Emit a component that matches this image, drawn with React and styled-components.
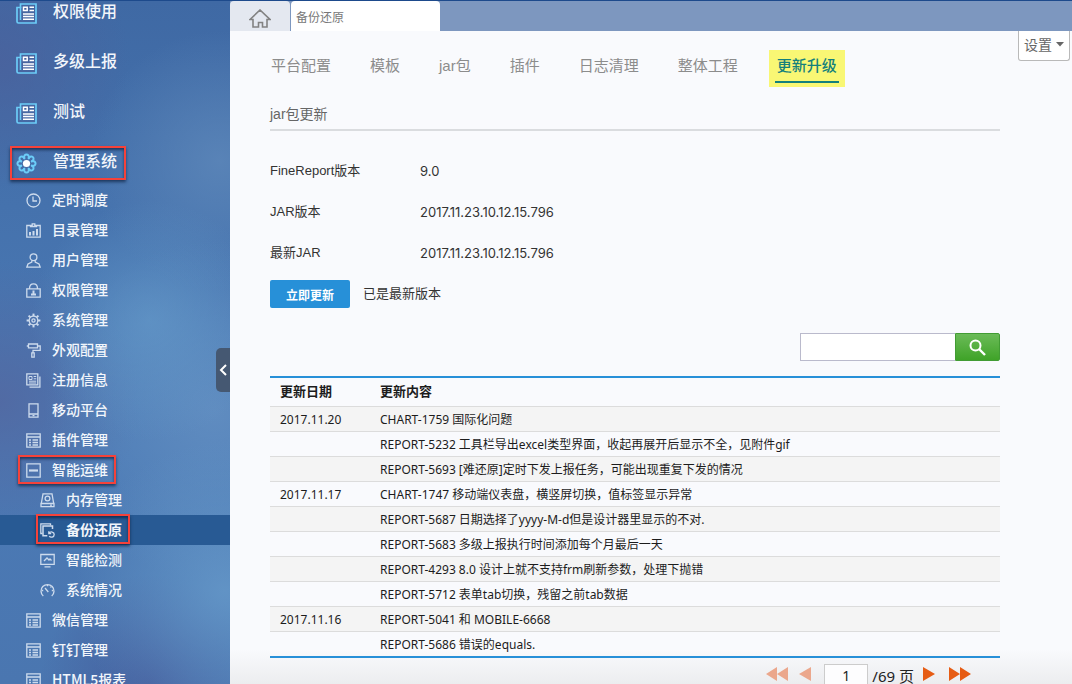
// src/App.jsx
import React, { useState } from 'react';
import styled, { createGlobalStyle, css } from 'styled-components';

const mainMenu = [
  { name: '权限使用', icon: 'news' },
  { name: '多级上报', icon: 'news' },
  { name: '测试', icon: 'news' },
  { name: '管理系统', icon: 'flower', mark: { left: 10, width: 116, top: 11, height: 34 } },
];

const subMenu = [
  { name: '定时调度', icon: 'clock' },
  { name: '目录管理', icon: 'report' },
  { name: '用户管理', icon: 'user' },
  { name: '权限管理', icon: 'lock' },
  { name: '系统管理', icon: 'gear' },
  { name: '外观配置', icon: 'roller' },
  { name: '注册信息', icon: 'card' },
  { name: '移动平台', icon: 'phone' },
  { name: '插件管理', icon: 'list' },
  { name: '智能运维', icon: 'minus', mark: { left: 18, width: 98, top: 0, height: 29 } },
  { name: '内存管理', icon: 'disk', deep: true },
  { name: '备份还原', icon: 'backup', deep: true, mark: { left: 36, width: 94, top: -1, height: 30 } },
  { name: '智能检测', icon: 'monitor', deep: true },
  { name: '系统情况', icon: 'gauge', deep: true },
  { name: '微信管理', icon: 'list' },
  { name: '钉钉管理', icon: 'list' },
  { name: 'HTML5报表', icon: 'list' },
];

const tabs = ['平台配置', '模板', 'jar包', '插件', '日志清理', '整体工程', '更新升级'];

const versions = [
  { label: 'FineReport版本', value: '9.0' },
  { label: 'JAR版本', value: '2017.11.23.10.12.15.796' },
  { label: '最新JAR', value: '2017.11.23.10.12.15.796' },
];

const updates = [
  ['2017.11.20', 'CHART-1759 国际化问题'],
  ['', 'REPORT-5232 工具栏导出excel类型界面，收起再展开后显示不全，见附件gif'],
  ['', 'REPORT-5693 [难还原]定时下发上报任务，可能出现重复下发的情况'],
  ['2017.11.17', 'CHART-1747 移动端仪表盘，横竖屏切换，值标签显示异常'],
  ['', 'REPORT-5687 日期选择了yyyy-M-d但是设计器里显示的不对.'],
  ['', 'REPORT-5683 多级上报执行时间添加每个月最后一天'],
  ['', 'REPORT-4293 8.0 设计上就不支持frm刷新参数，处理下抛错'],
  ['', 'REPORT-5712 表单tab切换，残留之前tab数据'],
  ['2017.11.16', 'REPORT-5041 和 MOBILE-6668'],
  ['', 'REPORT-5686 错误的equals.'],
];

const teeth = [0, 45, 90, 135, 180, 225, 270, 315];

// small icons are drawn on a 15 x 15 grid
const icons = {
  clock: (
    <>
      <circle cx="7.5" cy="7.5" r="6.5" />
      <path d="M7 3.5V8h4" />
    </>
  ),
  report: (
    <>
      <path d="M4 2.5H.8v11.7h13.4V2.5H11M4.5 3.5v-1h1.7V.8h2.6v1.7h1.7v1z" />
      <path d="M4 12.500V9M7.500 12.500V8M11 12.500V6" strokeWidth="2" />
    </>
  ),
  user: (
    <>
      <circle cx="7.500" cy="4.200" r="3.400" />
      <path d="M5.800 7.500v1.700L2 11 .8 14.200h13.400L13 11 9.200 9.200V7.500" />
    </>
  ),
  lock: (
    <>
      <path d="M.8 5.800h13.400v8.400H.8zM3.500 5.500C3.500 2.500 5 .8 7.500.8s4 1.700 4 4.700" />
      <path d="M7.500 7.500v3M5 11.500h5" strokeWidth="2" />
    </>
  ),
  gear: (
    <>
      <circle cx="7.500" cy="7.500" r="4.300" />
      <circle cx="7.500" cy="7.500" r="1.600" />
      {teeth.map((angle) => (
        <path key={angle} d="M7.500 3V.6" strokeWidth="2" transform={`rotate(${angle} 7.500 7.500)`} />
      ))}
    </>
  ),
  roller: <path d="M2.500 1h9v3.800h-9zM2.500 3H.8M11.500 3h2.700v4.300H7v2.500M5.800 9.800h2.400v4.400H5.800z" />,
  card: (
    <>
      <path d="M.8.8h11v11h-11zM13.900 3.500v10.600H3.500" />
      <path d="M3 3.500h3v3H3zM7.700 3.500h2.500M7.700 5.800h2.500M3 8.200h7.200M3 10h7.200" strokeWidth="1" />
    </>
  ),
  phone: (
    <>
      <path d="M3 .8h9v13.400H3zM3 11h9" />
      <path d="M6.500 12.600h2" />
    </>
  ),
  list: (
    <>
      <path d="M.8.8h13.400v13.400H.8zM.8 4h13.400" />
      <path d="M3 7h2M6.500 7H12M3 9.500h2M6.500 9.500H12M3 12h2M6.500 12H12" strokeWidth="1.500" />
    </>
  ),
  minus: (
    <>
      <path d="M.8.8h13.400v13.400H.8z" />
      <path d="M3 7.500h9" strokeWidth="2.200" />
    </>
  ),
  disk: (
    <>
      <path d="M3 .8h9l1.700 9.700H1.300zM1 10.500h13v3.200H1z" />
      <circle cx="7.500" cy="5.500" r="2.400" />
      <path d="M10 12.200h2" />
    </>
  ),
  backup: (
    <>
      <path d="M2.500 10.500H.8V.8h9.700v1.500" />
      <path d="M12.500 6V3H3v9.700h4.300" strokeWidth="1.500" />
      <path d="M8.800 8.300v2.300h2.400M9 10.300c1.500-2.300 5.200-1.500 5.200 1.200s-3.500 3.500-5 1.700" />
    </>
  ),
  monitor: <path d="M.8 1.500h13.400v9.800H.8zM4 8l3-3 2 2 1-1 1.500 1.500M4.500 13.800h6" />,
  gauge: (
    <>
      <path d="M3.300 13A6.500 6.500 0 1 1 11.700 13" />
      <path d="M5 5l3.300 4M7.500 2v1.200M2 7.500h1.200M11.800 7.500H13M10.500 4.500l.7-.7" />
    </>
  ),
};

const SmallIcon = ({ name }) => (
  <SmallSvg viewBox="0 0 15 15" aria-hidden="true">
    {icons[name]}
  </SmallSvg>
);

const NewsIcon = () => (
  <BigSvg viewBox="0 0 21 21" aria-hidden="true">
    <path d="M4.500 1h15.500v19H2.500Q1 20 1 18.500V4.500h3.500z" stroke="#6ccdf8" strokeWidth="1.700" />
    <path d="M4.500 4v13" stroke="#6ccdf8" strokeWidth="1.500" />
    <path d="M7.500 4.300h3.700v3.200H7.500z" stroke="#fff" strokeWidth="1.500" />
    <path d="M13.500 4.200H18M13.500 7.500H18M7 11h11M7 13.500h11M7 16.200h11" stroke="#fff" strokeWidth="1.500" />
  </BigSvg>
);

const FlowerIcon = () => (
  <BigSvg viewBox="0 0 21 21" aria-hidden="true">
    {teeth.map((angle) => (
      <path
        key={angle}
        d="M8.200 5.200C7.300 .2 13.700 .2 12.800 5.200"
        stroke="#6ccdf8"
        strokeWidth="2"
        strokeLinecap="round"
        transform={`rotate(${angle} 10.500 10.500)`}
      />
    ))}
    <circle cx="10.500" cy="10.500" r="3.600" fill="#fff" />
  </BigSvg>
);

const App = () => {
  const [current, setCurrent] = useState('备份还原');
  const [activeTab, setActiveTab] = useState('更新升级');
  const [keyword, setKeyword] = useState('');
  const [page, setPage] = useState('1');

  return (
    <>
      <GlobalStyle />
      <Shell>
        <Sidebar>
          <MenuList>
            {mainMenu.map((item) => (
              <MenuItem key={item.name}>
                <MainLink href="#">
                  {item.icon === 'news' ? <NewsIcon /> : <FlowerIcon />}
                  <MainLabel>{item.name}</MainLabel>
                </MainLink>
                {item.mark && <Mark $box={item.mark} />}
              </MenuItem>
            ))}
            {subMenu.map((item) => (
              <MenuItem key={item.name}>
                <SubLink
                  href="#"
                  $deep={item.deep}
                  $active={item.name === current}
                  onClick={() => setCurrent(item.name)}
                >
                  <SmallIcon name={item.icon} />
                  <SubLabel>{item.name}</SubLabel>
                </SubLink>
                {item.mark && <Mark $box={item.mark} />}
              </MenuItem>
            ))}
          </MenuList>
          <Collapse aria-label="收起">
            <svg width="8" height="12" viewBox="0 0 8 12" fill="none" stroke="#fff" strokeWidth="2">
              <path d="M7 1 2 6l5 5" />
            </svg>
          </Collapse>
        </Sidebar>

        <Main>
          <WindowTabs>
            <HomeTab aria-label="首页">
              <svg width="22" height="19" viewBox="0 0 22 19" fill="none" stroke="#828282" strokeWidth="1.600">
                <path d="M1 10.500 11 1l10 9.500h-3V18h-4.500v-4.500h-4V18H4v-7.500z" />
              </svg>
            </HomeTab>
            <PageTab>备份还原</PageTab>
          </WindowTabs>

          <Content>
            <TopRow>
              <Tabs>
                {tabs.map((name) => (
                  <Tab key={name} href="#" $active={name === activeTab} onClick={() => setActiveTab(name)}>
                    <span>{name}</span>
                  </Tab>
                ))}
              </Tabs>
              <Settings>
                设置
                <svg width="8" height="5" viewBox="0 0 8 5" fill="#666">
                  <path d="M0 0h8L4 4.500z" />
                </svg>
              </Settings>
            </TopRow>

            <Body>
              <SectionTitle>jar包更新</SectionTitle>
              <Versions>
                {versions.map((row) => (
                  <VersionRow key={row.label}>
                    <dt>{row.label}</dt>
                    <dd>{row.value}</dd>
                  </VersionRow>
                ))}
              </Versions>
              <UpdateRow>
                <UpdateButton>立即更新</UpdateButton>
                <span>已是最新版本</span>
              </UpdateRow>

              <SearchForm onSubmit={(e) => e.preventDefault()}>
                <SearchInput
                  type="text"
                  aria-label="搜索"
                  value={keyword}
                  onChange={(e) => setKeyword(e.target.value)}
                />
                <SearchButton type="submit" aria-label="搜索">
                  <svg width="17" height="17" viewBox="0 0 17 17" fill="none" stroke="#fff" strokeWidth="2">
                    <circle cx="6.500" cy="6.500" r="5" />
                    <path d="M10 10l6 6" strokeWidth="2.400" />
                  </svg>
                </SearchButton>
              </SearchForm>

              <Table>
                <thead>
                  <tr>
                    <DateHead>更新日期</DateHead>
                    <Head>更新内容</Head>
                  </tr>
                </thead>
                <tbody>
                  {updates.map(([date, text]) => (
                    <Row key={text}>
                      <Cell>{date}</Cell>
                      <Cell>{text}</Cell>
                    </Row>
                  ))}
                </tbody>
              </Table>

              <Pager>
                <PagerGroup>
                  <PagerButton aria-label="首页" disabled>
                    <svg width="22" height="14" viewBox="0 0 22 14">
                      <path d="M11 0v14L0 7zM22 0v14L11 7z" />
                    </svg>
                  </PagerButton>
                  <PagerButton aria-label="上一页" disabled>
                    <svg width="12" height="14" viewBox="0 0 12 14">
                      <path d="M12 0v14L0 7z" />
                    </svg>
                  </PagerButton>
                </PagerGroup>
                <PageBox>
                  <PageInput
                    type="text"
                    aria-label="页码"
                    value={page}
                    onChange={(e) => setPage(e.target.value)}
                  />
                  /69 页
                </PageBox>
                <PagerGroup $wide>
                  <PagerButton aria-label="下一页">
                    <svg width="12" height="14" viewBox="0 0 12 14">
                      <path d="M0 0v14l12-7z" />
                    </svg>
                  </PagerButton>
                  <PagerButton aria-label="末页">
                    <svg width="22" height="14" viewBox="0 0 22 14">
                      <path d="M0 0v14l11-7zM11 0v14l11-7z" />
                    </svg>
                  </PagerButton>
                </PagerGroup>
              </Pager>
            </Body>
          </Content>
        </Main>
      </Shell>
    </>
  );
};

export default App;

const GlobalStyle = createGlobalStyle`
  * {
    box-sizing: border-box;
  }
  body {
    margin: 0;
    overflow: hidden;
    font-family: "Liberation Sans", "Noto Sans CJK SC", sans-serif;
    font-size: 13px;
    color: #333;
  }
  a {
    text-decoration: none;
  }
  button, input {
    font-family: inherit;
    margin: 0;
  }
  button {
    cursor: pointer;
  }
`;

const Shell = styled.div`
  display: flex;
  height: 100vh;
  border-top: 1px solid #1d4a8c;
  overflow: hidden;
`;

const Sidebar = styled.nav`
  position: relative;
  flex: none;
  width: 230px;
  overflow: hidden;
  background:
    radial-gradient(circle at 150px 320px, rgba(103, 157, 204, 0.6), transparent 120px),
    radial-gradient(circle at 225px 590px, rgba(103, 154, 202, 0.8), transparent 150px),
    radial-gradient(circle at 215px 410px, rgba(101, 145, 195, 0.8), transparent 170px),
    radial-gradient(circle at 220px 160px, rgba(94, 136, 186, 0.8), transparent 130px),
    radial-gradient(circle at 150px 683px, rgba(68, 90, 154, 0.8), transparent 110px),
    radial-gradient(circle at 0 400px, rgba(83, 103, 160, 0.8), transparent 140px),
    radial-gradient(circle at 0 60px, rgba(75, 97, 156, 0.8), transparent 130px),
    linear-gradient(#3f69a4, #4572ad 30%, #4b7ab5 65%, #4a76b0);
`;

// the menu is scrolled a little, so its first entry is cut by the top edge
const MenuList = styled.ul`
  list-style: none;
  margin: -16px 0 0;
  padding: 0;
`;

const MenuItem = styled.li`
  position: relative;
`;

const MainLink = styled.a`
  display: flex;
  align-items: center;
  gap: 16px;
  height: 50px;
  padding: 6px 0 0 16px;
  font-family: "Noto Sans CJK SC", sans-serif;
  font-size: 16px;
  line-height: 20px;
  font-weight: 500;
  color: #f2f6fb;
`;

const MainLabel = styled.span`
  padding-bottom: 6px;
`;

const SubLink = styled.a`
  display: flex;
  align-items: center;
  gap: 11px;
  height: 30px;
  padding-left: ${(props) => (props.$deep ? 40 : 26)}px;
  font-family: "Noto Sans CJK SC", sans-serif;
  font-size: 14px;
  line-height: 20px;
  font-weight: 500;
  color: #f2f6fb;
  ${(props) =>
    props.$active &&
    css`
      background-color: #285a94;
      font-weight: 700;
    `}
`;

const SubLabel = styled.span`
  padding-bottom: 3px;
`;

const Mark = styled.span`
  position: absolute;
  top: ${(props) => props.$box.top}px;
  left: ${(props) => props.$box.left}px;
  width: ${(props) => props.$box.width}px;
  height: ${(props) => props.$box.height}px;
  border: 2px solid #f5423a;
  box-shadow: 0 2px 3px rgba(10, 30, 60, 0.7), inset 0 2px 3px rgba(10, 30, 60, 0.7);
  pointer-events: none;
  z-index: 1;
`;

const SmallSvg = styled.svg`
  flex: none;
  width: 15px;
  height: 15px;
  margin-top: 1px;
  fill: none;
  stroke: #cddbed;
  stroke-width: 1.3;
`;

const BigSvg = styled.svg`
  flex: none;
  width: 21px;
  height: 21px;
  fill: none;
`;

const Collapse = styled.button`
  position: absolute;
  right: 0;
  top: 347px;
  display: flex;
  align-items: center;
  justify-content: center;
  width: 14px;
  height: 44px;
  padding: 0;
  border: 0;
  border-radius: 5px 0 0 5px;
  background-color: #455872;
`;

const Main = styled.main`
  flex: 1;
  min-width: 0;
  display: flex;
  flex-direction: column;
`;

const WindowTabs = styled.div`
  display: flex;
  gap: 1px;
  flex: none;
  height: 30px;
  background-color: #7d97bf;
`;

const HomeTab = styled.button`
  display: flex;
  align-items: center;
  justify-content: center;
  width: 60px;
  padding: 4px 0 0;
  border: 0;
  border-radius: 4px 4px 0 0;
  background-color: #e4e8f0;
`;

const PageTab = styled.button`
  width: 149px;
  padding: 0 5px;
  border: 0;
  border-radius: 4px 4px 0 0;
  background-color: #fff;
  font-size: 12px;
  text-align: left;
  color: #777;
`;

const Content = styled.div`
  flex: 1;
  min-height: 0;
  background: linear-gradient(#f9fafd calc(100% - 35px), #ecedef);
`;

const TopRow = styled.div`
  display: flex;
  align-items: flex-start;
  justify-content: space-between;
  padding: 0 2px 0 33px;
`;

const Tabs = styled.div`
  display: flex;
  gap: 23px;
  padding-top: 19px;
`;

const Tab = styled.a`
  height: 37px;
  padding: 4px 6px 0;
  font-size: 15px;
  line-height: 24px;
  color: #8c8c8c;

  & span {
    display: block;
    height: 29px;
    padding: 0 2px;
  }

  ${(props) =>
    props.$active &&
    css`
      background-color: #f9f774;
      font-weight: 500;
      color: #14807c;

      & span {
        border-bottom: 2px solid #14807c;
      }
    `}
`;

const Settings = styled.button`
  display: flex;
  align-items: center;
  gap: 4px;
  height: 30px;
  padding: 0 5px 3px;
  border: 1px solid #b9b9b9;
  border-top: 0;
  border-radius: 0 0 3px 3px;
  background-color: #fff;
  font-size: 14px;
  color: #666;
`;

const Body = styled.div`
  padding: 0 72px 0 40px;
`;

const SectionTitle = styled.h2`
  margin: 0;
  padding: 17px 0 5px;
  border-bottom: 2px solid #dadcdf;
  font-size: 14px;
  font-weight: 400;
  line-height: 20px;
  color: #666;
`;

const Versions = styled.dl`
  display: flex;
  flex-direction: column;
  gap: 21px;
  margin: 30px 0 17px;
`;

const VersionRow = styled.div`
  display: grid;
  grid-template-columns: 150px 1fr;
  line-height: 20px;

  & dd {
    margin: 0;
    font-family: Inter, "Noto Sans CJK SC", sans-serif;
  }
`;

const UpdateRow = styled.div`
  display: flex;
  align-items: center;
  gap: 13px;
  line-height: 20px;

  & span {
    padding-bottom: 1px;
  }
`;

const UpdateButton = styled.button`
  width: 80px;
  height: 28px;
  padding: 0;
  border: 0;
  border-radius: 2px;
  background-color: #2790d8;
  font-size: 12px;
  font-weight: 700;
  color: #fff;
`;

const SearchForm = styled.form`
  display: flex;
  justify-content: flex-end;
  margin: 25px 0 15px;
`;

const SearchInput = styled.input`
  width: 155px;
  height: 28px;
  padding: 0 6px;
  border: 1px solid #babacc;
  border-right: 0;
  background-color: #fff;
`;

const SearchButton = styled.button`
  display: flex;
  align-items: center;
  justify-content: center;
  width: 45px;
  height: 28px;
  padding: 0;
  border: 1px solid #429c34;
  border-radius: 0 2px 2px 0;
  background: linear-gradient(#6bbb58, #3fa328);
`;

const Table = styled.table`
  width: 100%;
  border-collapse: separate;
  border-spacing: 0;
  border-top: 2px solid #2790d8;
  border-bottom: 2px solid #2790d8;
  font-family: "Noto Sans", "Noto Sans CJK SC", sans-serif;
  color: #1c1c1c;
`;

const Head = styled.th`
  height: 28px;
  padding: 0 10px 2px;
  font-size: 13px;
  line-height: 20px;
  text-align: left;
`;

const DateHead = styled(Head)`
  width: 100px;
`;

const Row = styled.tr`
  &:nth-child(odd) {
    background-color: #f4f4f4;
  }
`;

const Cell = styled.td`
  height: 25px;
  padding: 2px 10px 0;
  border-top: 1px solid #dcdcdc;
  font-size: 12px;
  line-height: 20px;
`;

const Pager = styled.div`
  display: flex;
  align-items: center;
  justify-content: flex-end;
  gap: 9px;
  margin: 6px 29px 0 0;
`;

const PagerGroup = styled.div`
  display: flex;
  gap: ${(props) => (props.$wide ? 14 : 11)}px;
`;

const PagerButton = styled.button`
  display: flex;
  padding: 0 0 4px;
  border: 0;
  background: none;
  fill: #e65c14;

  &:disabled {
    fill: #eba78c;
  }
`;

const PageBox = styled.label`
  display: flex;
  align-items: center;
  gap: 4px;
  margin-left: 4px;
  font-family: "Noto Sans", "Noto Sans CJK SC", sans-serif;
  font-size: 15px;
  line-height: 24px;
  color: #222;
`;

const PageInput = styled.input`
  width: 44px;
  height: 24px;
  padding: 0 0 2px;
  border: 1px solid #ccc;
  background-color: #fdfdfe;
  font-size: 14px;
  text-align: center;
  color: #222;
`;
